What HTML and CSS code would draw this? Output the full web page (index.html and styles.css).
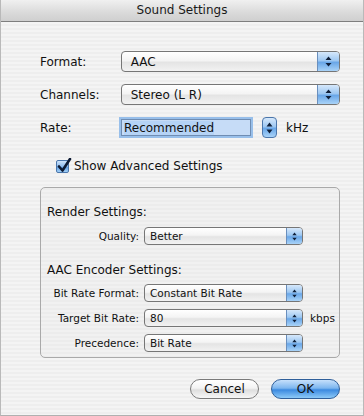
FILE: index.html
```html
<!DOCTYPE html>
<html lang="en">
<head>
    <meta charset="UTF-8">
    <title>Sound Settings</title>
    <link rel="stylesheet" href="styles.css">
</head>
<body>
    <div class="window">
        <div class="titlebar">Sound Settings</div>
        <div class="sheet">
            <div class="row">
                <span class="label">Format:</span>
                <div class="popup big"><span class="value">AAC</span><span class="arrows"><svg width="7" height="11" viewBox="0 0 7 11"><path d="M3.5 0.5L6.5 4H0.5Z M3.5 10.5L6.5 7H0.5Z"/></svg></span></div>
            </div>
            <div class="row">
                <span class="label">Channels:</span>
                <div class="popup big"><span class="value">Stereo (L R)</span><span class="arrows"><svg width="7" height="11" viewBox="0 0 7 11"><path d="M3.5 0.5L6.5 4H0.5Z M3.5 10.5L6.5 7H0.5Z"/></svg></span></div>
            </div>
            <div class="row rate-row">
                <span class="label">Rate:</span>
                <div class="field"><span class="selected">Recommended</span></div>
                <span class="stepper"><svg width="7" height="12" viewBox="0 0 7 12"><path d="M3.5 0.5L6.5 4.5H0.5Z M3.5 11.5L6.5 7.5H0.5Z"/></svg></span>
                <span class="unit">kHz</span>
            </div>
            <label class="check">
                <span class="box"><svg width="16" height="16" viewBox="0 0 16 16"><path d="M3 8.5L6.5 12.5L14 1" fill="none" stroke="#0d1a33" stroke-width="2.6" stroke-linecap="round" stroke-linejoin="round"/></svg></span>
                Show Advanced Settings
            </label>
            <div class="group">
                <div class="heading">Render Settings:</div>
                <div class="mini-row first">
                    <span class="mini-label">Quality:</span>
                    <div class="popup small"><span class="value">Better</span><span class="arrows"><svg width="5" height="9" viewBox="0 0 5 9"><path d="M2.5 0.5L4.7 3.3H0.3Z M2.5 8.5L4.7 5.7H0.3Z"/></svg></span></div>
                </div>
                <div class="heading second">AAC Encoder Settings:</div>
                <div class="mini-row first">
                    <span class="mini-label">Bit Rate Format:</span>
                    <div class="popup small"><span class="value">Constant Bit Rate</span><span class="arrows"><svg width="5" height="9" viewBox="0 0 5 9"><path d="M2.5 0.5L4.7 3.3H0.3Z M2.5 8.5L4.7 5.7H0.3Z"/></svg></span></div>
                </div>
                <div class="mini-row">
                    <span class="mini-label">Target Bit Rate:</span>
                    <div class="popup small"><span class="value">80</span><span class="arrows"><svg width="5" height="9" viewBox="0 0 5 9"><path d="M2.5 0.5L4.7 3.3H0.3Z M2.5 8.5L4.7 5.7H0.3Z"/></svg></span></div>
                    <span class="mini-unit">kbps</span>
                </div>
                <div class="mini-row">
                    <span class="mini-label">Precedence:</span>
                    <div class="popup small"><span class="value">Bit Rate</span><span class="arrows"><svg width="5" height="9" viewBox="0 0 5 9"><path d="M2.5 0.5L4.7 3.3H0.3Z M2.5 8.5L4.7 5.7H0.3Z"/></svg></span></div>
                </div>
            </div>
            <div class="buttons">
                <button class="btn cancel">Cancel</button>
                <button class="btn ok">OK</button>
            </div>
        </div>
    </div>
</body>
</html>
```

FILE: styles.css
```css
body {
    margin: 0;
    font-family: "DejaVu Sans", "Liberation Sans", sans-serif;
    color: #111;
}
.window {
    width: 364px;
    height: 416px;
    box-sizing: border-box;
    border-left: 1px solid #b9b9b9;
    border-right: 1px solid #b9b9b9;
    border-bottom: 1px solid #b0b0b0;
    background: repeating-linear-gradient(#eeeeee 0 2px, #f4f4f4 2px 4px);
}
.titlebar {
    height: 21px;
    line-height: 21px;
    text-align: center;
    font-size: 12px;
    color: #1a1a1a;
    background: linear-gradient(#f0f0f0, #dadada 60%, #cfcfcf);
    border-bottom: 1px solid #7e7e7e;
}
.sheet {
    padding: 29px 23px 0 39px;
}
.row {
    display: flex;
    align-items: center;
    height: 21px;
    margin-bottom: 12px;
}
.label {
    width: 81px;
    font-size: 12px;
}
.popup {
    display: flex;
    align-items: stretch;
    box-sizing: border-box;
    border: 1px solid #767676;
    border-radius: 4px;
    background: linear-gradient(#ffffff, #f4f4f4 45%, #e4e4e4 55%, #f2f2f2);
    overflow: hidden;
}
.popup .value {
    flex: 1;
    display: flex;
    align-items: center;
}
.popup .arrows {
    display: flex;
    align-items: center;
    justify-content: center;
    border-left: 1px solid #6a8fbd;
    background: linear-gradient(#d6e8fb, #9ec8f2 45%, #6aa7e8 55%, #a9d3f8);
}
.popup .arrows svg {
    fill: #10203a;
}
.big {
    width: 220px;
    height: 21px;
}
.big .value {
    padding-left: 9px;
    font-size: 12px;
}
.big .arrows {
    width: 21px;
}
.rate-row {
    height: 23px;
    margin-top: -1px;
}
.rate-row .label {
    width: 81px;
}
.field {
    width: 130px;
    height: 17px;
    box-sizing: border-box;
    border: 1px solid #6f8db3;
    background: #c6dcf7;
    box-shadow: 0 0 0 2px #98bfea;
    display: flex;
    align-items: center;
    padding-left: 2px;
    font-size: 12px;
}
.selected {
    background: #b5d3f6;
}
.stepper {
    display: flex;
    align-items: center;
    justify-content: center;
    width: 15px;
    height: 21px;
    margin-left: 11px;
    box-sizing: border-box;
    border: 1px solid #4b76ab;
    border-radius: 4px;
    background: linear-gradient(#d6e8fb, #9ec8f2 45%, #6aa7e8 55%, #a9d3f8);
}
.stepper svg {
    fill: #10203a;
}
.unit {
    margin-left: 9px;
    font-size: 12px;
}
.check {
    display: flex;
    align-items: center;
    height: 16px;
    margin: 19px 0 0 16px;
    font-size: 12px;
}
.box {
    position: relative;
    width: 13px;
    height: 13px;
    margin-right: 5px;
    box-sizing: border-box;
    border: 1px solid #4b76ab;
    border-radius: 2px;
    background: linear-gradient(#cfe4fb, #8dbcee 50%, #5f9fe4 55%, #a3d0f7);
}
.box svg {
    position: absolute;
    left: -1px;
    top: -3px;
}
.group {
    margin-top: 13px;
    height: 171px;
    box-sizing: border-box;
    border: 1px solid #a9a9a9;
    border-radius: 5px;
    background: repeating-linear-gradient(#ececec 0 2px, #f1f1f1 2px 4px);
    padding: 16px 0 0 6px;
}
.heading {
    height: 16px;
    line-height: 16px;
    font-size: 12px;
}
.heading.second {
    margin-top: 17px;
}
.mini-row {
    display: flex;
    align-items: center;
    height: 18px;
    margin-top: 7px;
}
.mini-row.first {
    margin-top: 7px;
}
.heading.second + .mini-row {
    margin-top: 6px;
}
.mini-label {
    width: 92px;
    margin-right: 5px;
    text-align: right;
    font-size: 10.5px;
}
.small {
    width: 159px;
    height: 18px;
}
.small .value {
    padding-left: 5px;
    font-size: 10.5px;
}
.small .arrows {
    width: 15px;
}
.mini-unit {
    margin-left: 7px;
    font-size: 10.5px;
}
.buttons {
    display: flex;
    justify-content: flex-end;
    gap: 12px;
    margin-top: 21px;
}
.btn {
    height: 20px;
    border-radius: 10px;
    font-family: "DejaVu Sans", "Liberation Sans", sans-serif;
    font-size: 12px;
    color: #111;
    padding: 0;
    cursor: pointer;
}
.cancel {
    width: 69px;
    border: 1px solid #7a7a7a;
    background: linear-gradient(#ffffff, #f3f3f3 45%, #dedede 55%, #f7f7f7);
}
.ok {
    width: 69px;
    border: 1px solid #2f5f9a;
    background: linear-gradient(#c6e0fb, #7db6ef 45%, #3c8ae0 55%, #8dcaf8);
}
```
